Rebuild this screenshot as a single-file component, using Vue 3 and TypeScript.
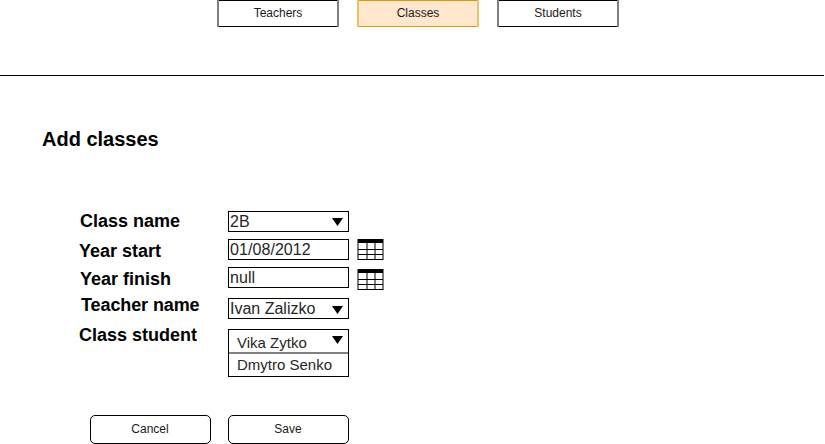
<script setup lang="ts">
import { ref } from 'vue'

type FieldKind = 'select' | 'date' | 'list'

interface Field {
  id: string
  label: string
  value: string
  kind: FieldKind
  options?: string[]
}

const tabs = ['Teachers', 'Classes', 'Students']
const activeTab = ref('Classes')

const fields: Field[] = [
  { id: 'class-name', label: 'Class name', value: '2B', kind: 'select' },
  { id: 'year-start', label: 'Year start', value: '01/08/2012', kind: 'date' },
  { id: 'year-finish', label: 'Year finish', value: 'null', kind: 'date' },
  { id: 'teacher-name', label: 'Teacher name', value: 'Ivan Zalizko', kind: 'select' },
  { id: 'class-student', label: 'Class student', value: 'Vika Zytko', kind: 'list', options: ['Dmytro Senko'] },
]
</script>

<template>
  <div class="page">
    <nav class="tabs">
      <button
        v-for="tab in tabs"
        :key="tab"
        class="tab"
        :class="{ active: tab === activeTab }"
        @click="activeTab = tab"
      >
        {{ tab }}
      </button>
    </nav>

    <main class="content">
      <h1 class="title">Add classes</h1>

      <div class="form">
        <div class="labels">
          <div v-for="field in fields" :key="field.id" class="label" :class="field.id">{{ field.label }}</div>
        </div>

        <div class="controls">
          <div v-for="field in fields" :key="field.id" class="row" :class="field.id">
            <div class="field" :class="field.kind">
              <div class="current">
                <span class="value">{{ field.value }}</span>
                <svg v-if="field.kind !== 'date'" class="arrow" width="12" height="8" viewBox="0 0 12 8">
                  <path d="M1 0H12L6.5 8Z" fill="#000" />
                </svg>
              </div>
              <div v-for="option in field.options" :key="option" class="option">{{ option }}</div>
            </div>
            <svg v-if="field.kind === 'date'" class="calendar" width="27" height="21" viewBox="0 0 27 21">
              <path d="M1 0V21M10 0V21M18 0V21M26 0V21" stroke="#000" fill="none" />
              <path d="M1 10.5H26M1 15.5H26M1 20.5H26" stroke="#000" fill="none" />
              <path d="M1 0H26V4H1Z" fill="#000" />
            </svg>
          </div>
        </div>
      </div>

      <div class="actions">
        <button class="action">Cancel</button>
        <button class="action save">Save</button>
      </div>
    </main>
  </div>
</template>

<style>
body {
  margin: 0;
  background: #fff;
}
</style>

<style scoped>
.page {
  width: 825px;
  height: 444px;
  overflow: hidden;
  box-sizing: border-box;
  font-family: "Liberation Sans", Arial, Helvetica, sans-serif;
  color: #000;
}

.page * {
  box-sizing: border-box;
}

.tabs {
  display: flex;
  gap: 18px;
  width: 824px;
  height: 76px;
  padding-left: 217px;
  border-bottom: 1px solid #000;
}

.tab {
  width: 122px;
  height: 27px;
  margin: 0;
  padding: 0;
  border: 0 solid #808080;
  border-width: 0 2px;
  background: linear-gradient(#000, #000) top / 100% 1px no-repeat,
    linear-gradient(#000, #000) bottom / 100% 1px no-repeat, #fff;
  font: 12px/25px "Liberation Sans", Arial, sans-serif;
  color: #1a1a1a;
}

.tab.active {
  border-color: #ebc266;
  background: linear-gradient(#d79b00, #d79b00) top / 100% 1px no-repeat,
    linear-gradient(#d79b00, #d79b00) bottom / 100% 1px no-repeat, #ffe6cc;
}

.title {
  margin: 0;
  padding: 51px 0 0 42px;
  font-size: 20px;
  line-height: 24px;
  font-weight: bold;
}

.form {
  display: flex;
  height: 166px;
  margin-top: 60px;
}

.labels {
  width: 228px;
  padding-left: 80px;
}

.label {
  font-size: 18px;
  line-height: 20px;
  font-weight: bold;
  white-space: nowrap;
}

.label.year-start {
  margin: 10px 0 0 -1px;
}

.label.year-finish {
  margin-top: 8px;
}

.label.teacher-name {
  margin: 6px 0 0 1px;
  letter-spacing: -0.1px;
}

.label.class-student {
  margin: 10px 0 0 -1px;
}

.row {
  display: flex;
  align-items: flex-start;
  height: 21px;
}

.row.year-start,
.row.year-finish {
  margin-top: 7px;
}

.row.teacher-name,
.row.class-student {
  margin-top: 10px;
}

.row.class-student {
  height: 48px;
}

.field {
  width: 121px;
  height: 21px;
  border: 1px solid #000;
  font-size: 16px;
  line-height: 19px;
  color: #262626;
}

.current {
  display: flex;
  justify-content: space-between;
  height: 19px;
  padding: 0 5px 0 1px;
}

.date .value {
  letter-spacing: 0.07px;
}

.arrow {
  margin-top: 6px;
}

.teacher-name .arrow {
  margin-top: 7px;
}

.calendar {
  margin-left: 8px;
}

.year-finish .calendar {
  margin-top: 2px;
}

.list {
  height: 48px;
  font-size: 15px;
}

.list .current {
  height: 24px;
  padding-left: 8px;
  border-bottom: 2px solid #808080;
  line-height: 25px;
}

.option {
  padding-left: 8px;
  line-height: 21px;
}

.actions {
  display: flex;
  gap: 17px;
  margin-top: 38px;
  padding-left: 90px;
}

.action {
  width: 121px;
  height: 29px;
  padding: 0 1px 0 0;
  border: 1px solid #000;
  border-radius: 5px;
  background: #fff;
  font: 12px/27px "Liberation Sans", Arial, sans-serif;
  color: #1a1a1a;
}
</style>
